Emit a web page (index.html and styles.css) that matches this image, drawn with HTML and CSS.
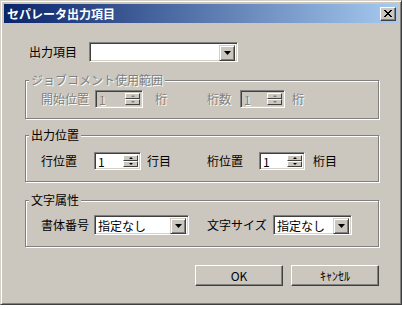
FILE: index.html
```html
<!DOCTYPE html>
<html>
	<head>
	<meta charset="utf-8">
	<link rel="stylesheet" href="styles.css">
	</head>
	<body>
		<div class="window">
			<div class="titlebar">
				<span class="title">セパレータ出力項目</span>
				<button class="close">
					<svg width="8" height="7" viewBox="0 0 8 7" shape-rendering="crispEdges">
						<path d="M0 0h2l2 2.5 2-2.5h2L5 3.5 8 7H6L4 4.5 2 7H0l3-3.5z" fill="#000"/>
					</svg>
				</button>
			</div>

			<div class="content">
				<div class="item-row">
					<span class="item-label">出力項目</span>
					<div class="combo combo-item">
						<span class="combo-text"></span>
						<span class="combo-btn"><svg width="7" height="4" viewBox="0 0 7 4"><path d="M0 0h7L3.5 4z" fill="#000"/></svg></span>
					</div>
				</div>

				<div class="group disabled">
					<span class="group-title">ジョブコメント使用範囲</span>
					<div class="fields fields-range">
						<span>開始位置</span>
						<div class="spin">
							<span class="spin-text">1</span>
							<span class="spin-btns"><span class="spin-btn up"></span><span class="spin-btn down"></span></span>
						</div>
						<span class="unit">桁</span>
						<span>桁数</span>
						<div class="spin">
							<span class="spin-text">1</span>
							<span class="spin-btns"><span class="spin-btn up"></span><span class="spin-btn down"></span></span>
						</div>
						<span class="unit">桁</span>
					</div>
				</div>

				<div class="group">
					<span class="group-title">出力位置</span>
					<div class="fields fields-pos">
						<span>行位置</span>
						<div class="spin">
							<span class="spin-text">1</span>
							<span class="spin-btns"><span class="spin-btn up"></span><span class="spin-btn down"></span></span>
						</div>
						<span class="unit">行目</span>
						<span>桁位置</span>
						<div class="spin">
							<span class="spin-text">1</span>
							<span class="spin-btns"><span class="spin-btn up"></span><span class="spin-btn down"></span></span>
						</div>
						<span class="unit">桁目</span>
					</div>
				</div>

				<div class="group">
					<span class="group-title">文字属性</span>
					<div class="fields fields-font">
						<span>書体番号</span>
						<div class="combo">
							<span class="combo-text">指定なし</span>
							<span class="combo-btn"><svg width="7" height="4" viewBox="0 0 7 4"><path d="M0 0h7L3.5 4z" fill="#000"/></svg></span>
						</div>
						<span class="unit">文字サイズ</span>
						<div class="combo">
							<span class="combo-text">指定なし</span>
							<span class="combo-btn"><svg width="7" height="4" viewBox="0 0 7 4"><path d="M0 0h7L3.5 4z" fill="#000"/></svg></span>
						</div>
					</div>
				</div>

				<div class="buttons">
					<button class="btn">OK</button>
					<button class="btn">ｷｬﾝｾﾙ</button>
				</div>
			</div>
		</div>
	</body>
</html>
```

FILE: styles.css
```css
	html, body {
		margin: 0px;
		background: #fff;
		font-family: "Noto Sans CJK JP", "Liberation Sans", sans-serif;
		font-size: 12px;
		color: #000;
	}

	div.window {
		width: 402px;
		height: 305px;
		box-sizing: border-box;
		background: #cbc7bf;
		border: 1px solid;
		border-color: #d4d0c8 #404040 #404040 #d4d0c8;
		box-shadow: inset 1px 1px #fff, inset -1px -1px #808080;
		padding: 3px;
	}

	div.titlebar {
		height: 19px;
		display: flex;
		align-items: center;
		justify-content: space-between;
		padding: 0 2px 0 3px;
		background: linear-gradient(to right, #0a246a, #a6caf0);
	}

	span.title {
		color: #fff;
		font-weight: bold;
		font-size: 12px;
		line-height: 14px;
	}

	button.close {
		width: 16px;
		height: 14px;
		padding: 0;
		display: flex;
		align-items: center;
		justify-content: center;
		background: #cbc7bf;
		border: 1px solid;
		border-color: #fff #404040 #404040 #fff;
		box-shadow: inset -1px -1px #808080;
	}

	div.content {
		padding: 19px 19px 0 21px;
	}

	div.item-row {
		display: flex;
		align-items: center;
	}

	span.item-label {
		width: 60px;
		padding-left: 4px;
		line-height: 14px;
	}

	/* sunken combo box */
	div.combo {
		height: 20px;
		box-sizing: border-box;
		display: flex;
		padding: 2px;
		background: #fff;
		border: 1px solid;
		border-color: #808080 #fff #fff #808080;
		box-shadow: inset 1px 1px #404040, inset -1px -1px #d4d0c8;
	}

	div.combo-item {
		width: 149px;
	}

	span.combo-text {
		flex: 1;
		padding-left: 1px;
		line-height: 16px;
		white-space: nowrap;
	}

	span.combo-btn {
		width: 16px;
		height: 16px;
		box-sizing: border-box;
		display: flex;
		align-items: center;
		justify-content: center;
		background: #cbc7bf;
		border: 1px solid;
		border-color: #d4d0c8 #404040 #404040 #d4d0c8;
		box-shadow: inset 1px 1px #fff, inset -1px -1px #808080;
	}

	/* etched group frame */
	div.group {
		position: relative;
		margin-top: 16px;
		border: 1px solid #808080;
		box-shadow: inset 1px 1px #fff, 1px 1px #fff;
		padding: 16px 0 11px 15px;
	}

	div.group:nth-of-type(2) {
		margin-top: 18px;
		padding-top: 9px;
		padding-bottom: 10px;
	}

	div.group:nth-of-type(4) {
		margin-top: 18px;
		padding-top: 14px;
	}

	span.group-title {
		position: absolute;
		top: -8px;
		left: 3px;
		padding: 0 2px;
		line-height: 14px;
		background: #cbc7bf;
	}

	div.disabled {
		color: #808080;
	}

	div.disabled span {
		text-shadow: 1px 1px 0 #fff;
	}

	div.fields {
		display: grid;
		align-items: center;
		line-height: 14px;
		white-space: nowrap;
	}

	div.fields-range {
		grid-template-columns: 54px 48px 64px 33px 45px auto;
	}
	div.fields-range .unit { padding-left: 12px; }
	div.fields-range .unit:last-child { padding-left: 7px; }

	div.fields-pos {
		grid-template-columns: 53px 47px 66px 52px 46px auto;
	}
	div.fields-pos .unit { padding-left: 6px; }
	div.fields-pos .unit:last-child { padding-left: 8px; }

	div.fields-font {
		grid-template-columns: 53px 95px 84px 79px;
	}
	div.fields-font .unit { padding-left: 18px; }

	/* spin edit */
	div.spin {
		height: 18px;
		box-sizing: border-box;
		display: flex;
		padding: 2px;
		background: #fff;
		border: 1px solid;
		border-color: #808080 #fff #fff #808080;
		box-shadow: inset 1px 1px #404040, inset -1px -1px #d4d0c8;
	}

	div.disabled div.spin {
		background: #cbc7bf;
	}

	span.spin-text {
		flex: 1;
		padding-left: 1px;
		line-height: 14px;
	}

	span.spin-btns {
		width: 15px;
		display: flex;
		flex-direction: column;
	}

	span.spin-btn {
		flex: 1;
		display: flex;
		align-items: center;
		justify-content: center;
		background: #cbc7bf;
		box-sizing: border-box;
		border: 1px solid;
		border-color: #fff #404040 #404040 #fff;
	}

	span.spin-btn::after {
		content: "";
		width: 0;
		height: 0;
		border-left: 2px solid transparent;
		border-right: 2px solid transparent;
	}

	span.up::after {
		border-bottom: 2px solid #000;
	}

	span.down::after {
		border-top: 2px solid #000;
	}

	div.disabled span.up::after { border-bottom-color: #808080; }
	div.disabled span.down::after { border-top-color: #808080; }

	div.buttons {
		display: flex;
		justify-content: flex-end;
		gap: 8px;
		margin-top: 18px;
	}

	button.btn {
		width: 88px;
		height: 21px;
		padding: 0;
		font-family: inherit;
		font-size: 12px;
		color: #000;
		background: #cbc7bf;
		border: 1px solid;
		border-color: #fff #404040 #404040 #fff;
		box-shadow: inset -1px -1px #808080;
	}
```
